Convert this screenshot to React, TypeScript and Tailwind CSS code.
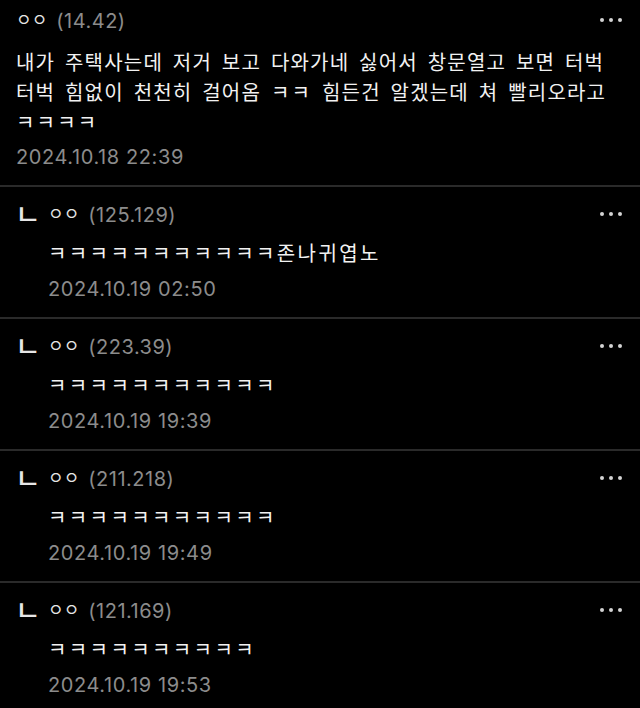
import React from "react";

interface Reply {
  ip: string;
  laughs: string;
  rest?: string;
  date: string;
}

const replies: Reply[] = [
  { ip: "(125.129)", laughs: "ㅋㅋㅋㅋㅋㅋㅋㅋㅋㅋㅋ", rest: "존나귀엽노", date: "2024.10.19 02:50" },
  { ip: "(223.39)", laughs: "ㅋㅋㅋㅋㅋㅋㅋㅋㅋㅋㅋ", date: "2024.10.19 19:39" },
  { ip: "(211.218)", laughs: "ㅋㅋㅋㅋㅋㅋㅋㅋㅋㅋㅋ", date: "2024.10.19 19:49" },
  { ip: "(121.169)", laughs: "ㅋㅋㅋㅋㅋㅋㅋㅋㅋㅋ", date: "2024.10.19 19:53" },
];

const font = { fontFamily: '"Inter", "Noto Sans CJK KR", sans-serif' };

const MoreDots: React.FC = () => (
  <div className="flex items-center gap-[5px] pb-[2px]">
    <span className="block h-[4px] w-[4px] rounded-full bg-[#d4d4d4]" />
    <span className="block h-[4px] w-[4px] rounded-full bg-[#d4d4d4]" />
    <span className="block h-[4px] w-[4px] rounded-full bg-[#d4d4d4]" />
  </div>
);

const Author: React.FC<{ ip: string }> = ({ ip }) => (
  <div className="flex items-center gap-[9px]">
    <span className="text-[17px] text-[#e6e6e6]">ㅇㅇ</span>
    <span className="text-[20px] tracking-[0.5px] text-[#8c8c8c]">{ip}</span>
  </div>
);

const Divider: React.FC = () => <div className="h-[2px] bg-[#2a2a2a]" />;

export default function App() {
  return (
    <div className="min-h-[708px] w-[640px] bg-black" style={font}>
      {/* original post */}
      <div className="pl-[16px] pr-[18px] pt-[7px] pb-[13px]">
        <div className="flex h-[28px] items-center justify-between">
          <Author ip="(14.42)" />
          <MoreDots />
        </div>
        <p className="mt-[13px] whitespace-nowrap text-[20px] leading-[30px] tracking-[1.2px] [word-spacing:3px] text-[#f2f2f2]">
          내가 주택사는데 저거 보고 다와가네 싫어서 창문열고 보면 터벅
          <br />
          터벅 힘없이 천천히 걸어옴 <span className="tracking-[2.2px]">ㅋㅋ</span> 힘든건 알겠는데 쳐 빨리오라고
          <br />
          <span className="tracking-[2.2px]">ㅋㅋㅋㅋ</span>
        </p>
        <div className="mt-[4px] h-[30px] text-[20px] leading-[30px] tracking-[0.6px] text-[#8c8c8c]">
          2024.10.18 22:39
        </div>
      </div>
      <Divider />

      {/* replies */}
      {replies.map((r, i) => (
        <React.Fragment key={r.ip}>
          <div className="flex pl-[15px] pr-[18px] pt-[14px] pb-[13px]">
            <div className="w-[33px] shrink-0">
              <div className="flex h-[28px] items-center text-[28px] font-medium leading-none text-[#e6e6e6]">
                ㄴ
              </div>
            </div>
            <div className="flex-1">
              <div className="flex h-[28px] items-center justify-between">
                <Author ip={r.ip} />
                <MoreDots />
              </div>
              <div className="mt-[10px] h-[30px] whitespace-nowrap text-[20px] leading-[30px] text-[#f2f2f2]">
                <span className="tracking-[2.4px]">{r.laughs}</span>
                {r.rest && <span className="tracking-[2.4px]">{r.rest}</span>}
              </div>
              <div className="mt-[5px] h-[30px] text-[20px] leading-[30px] tracking-[0.6px] text-[#8c8c8c]">
                {r.date}
              </div>
            </div>
          </div>
          {i < replies.length - 1 && <Divider />}
        </React.Fragment>
      ))}
    </div>
  );
}
